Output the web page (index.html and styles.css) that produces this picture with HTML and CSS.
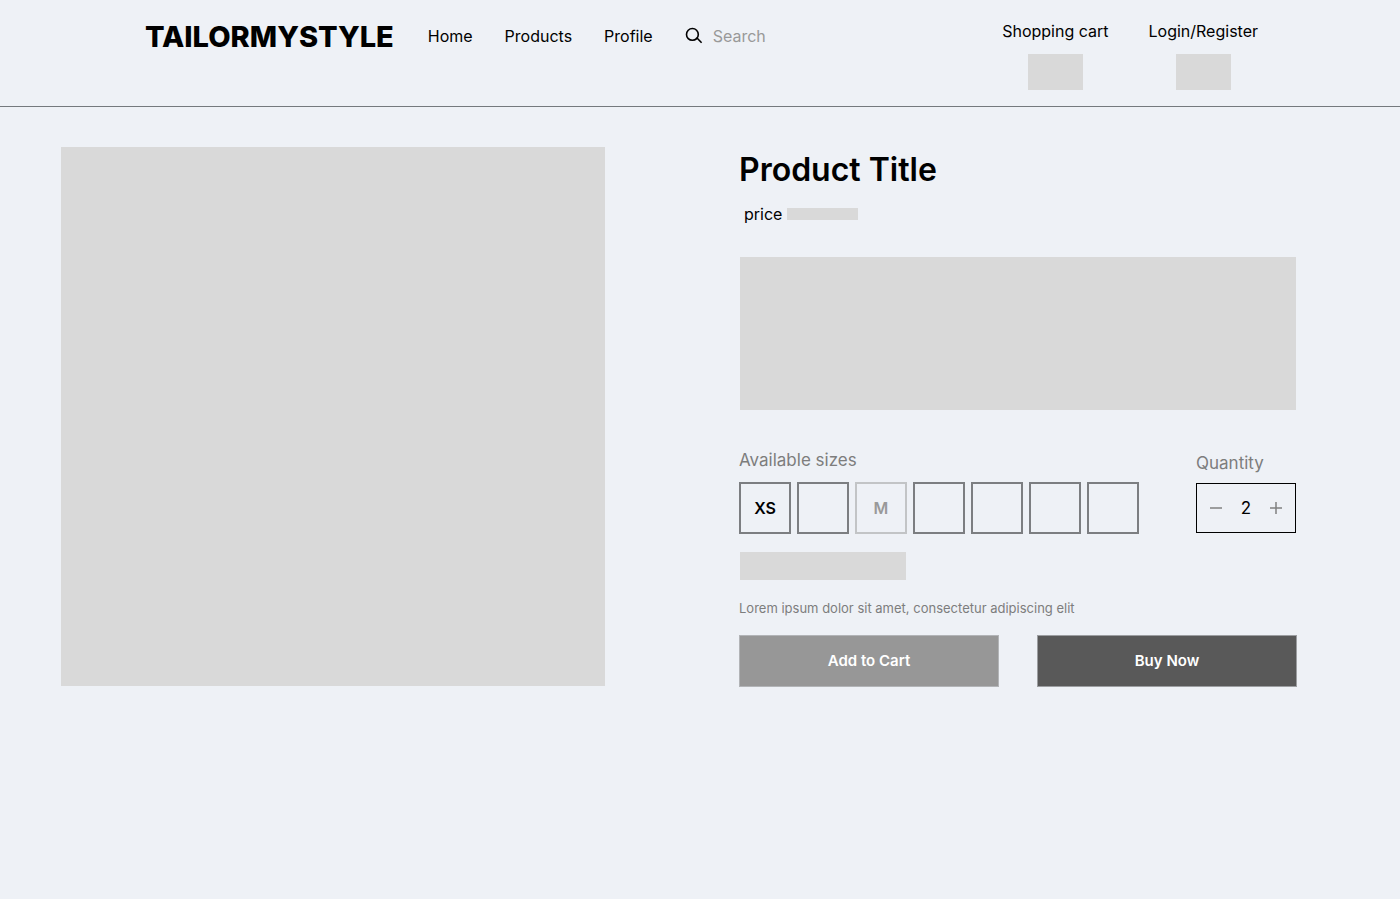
FILE: index.html
```html
<!DOCTYPE html>
<html lang="en">
<head>
<meta charset="utf-8">
<meta name="viewport" content="width=device-width, initial-scale=1">
<title>TAILORMYSTYLE</title>
<link rel="stylesheet" href="styles.css">
</head>
<body>
<header class="header">
  <a class="logo" href="#">TAILORMYSTYLE</a>
  <nav class="nav">
    <a href="#">Home</a>
    <a href="#">Products</a>
    <a href="#">Profile</a>
  </nav>
  <form class="search">
    <label class="search-label" for="search" aria-label="Search">
      <svg width="18" height="18" viewBox="0 0 18 18" fill="none" stroke="currentColor" stroke-width="1.6"><circle cx="7.4" cy="7.4" r="5.9"/><path d="M10.9 11.5L12.3 11.3L16.6 15.8"/></svg>
    </label>
    <input class="search-input" id="search" type="text" placeholder="Search">
  </form>
  <div class="account">
    <a class="account-link" href="#">Shopping cart<span class="block account-block"></span></a>
    <a class="account-link" href="#">Login/Register<span class="block account-block"></span></a>
  </div>
</header>
<main class="product">
  <div class="block photo"></div>
  <section class="details">
    <h1 class="title">Product Title</h1>
    <p class="price">price<span class="block price-block"></span></p>
    <div class="block description"></div>
    <div class="options">
      <div class="sizes">
        <h2 class="label">Available sizes</h2>
        <div class="size-list">
          <button class="size" type="button">XS</button>
          <button class="size" type="button" aria-label="Size 2"></button>
          <button class="size" type="button" disabled>M</button>
          <button class="size" type="button" aria-label="Size 4"></button>
          <button class="size" type="button" aria-label="Size 5"></button>
          <button class="size" type="button" aria-label="Size 6"></button>
          <button class="size" type="button" aria-label="Size 7"></button>
        </div>
      </div>
      <div class="quantity">
        <label class="label" for="quantity">Quantity</label>
        <div class="stepper">
          <button class="step" type="button" aria-label="Decrease"><svg width="12" height="12" viewBox="0 0 12 12" stroke="currentColor" stroke-width="1.5"><path d="M0 6H12"/></svg></button>
          <input class="amount" id="quantity" type="text" inputmode="numeric" value="2">
          <button class="step" type="button" aria-label="Increase"><svg width="12" height="12" viewBox="0 0 12 12" stroke="currentColor" stroke-width="1.5"><path d="M0 6H12M6 0V12"/></svg></button>
        </div>
      </div>
    </div>
    <div class="block guide"></div>
    <p class="note">Lorem ipsum dolor sit amet, consectetur adipiscing elit</p>
    <div class="actions">
      <button class="action" type="button">Add to Cart</button>
      <button class="action action-dark" type="button">Buy Now</button>
    </div>
  </section>
</main>
</body>
</html>
```
FILE: styles.css
```css
* { box-sizing: border-box; }

body {
  margin: 0;
  min-height: 100vh;
  background: #eef1f6;
  color: #000;
  font-family: Inter, "Liberation Sans", sans-serif;
  font-size: 16px;
  line-height: 24px;
}

a { color: inherit; text-decoration: none; }
h1, h2, p { margin: 0; }

button, input {
  font: inherit;
  color: inherit;
  padding: 0;
  border: 0;
  border-radius: 0;
  background: transparent;
}

svg { display: block; }
.block { display: block; background: #d9d9d9; }

.header {
  display: flex;
  align-items: flex-start;
  padding: 19px 142px 16px 145px;
  border-bottom: 1px solid #74797d;
}

.logo { font-size: 29px; font-weight: 800; line-height: 35px; }

.nav {
  display: flex;
  gap: 32px;
  margin-left: 34px;
  padding-top: 5px;
}

.search {
  display: flex;
  flex: 1;
  align-items: center;
  gap: 10px;
  margin-left: 32px;
  padding-top: 5px;
}

.search-input { width: 120px; height: 24px; }
.search-input::placeholder { color: #999; opacity: 1; }

.account { display: flex; gap: 40px; }

.account-link {
  display: flex;
  flex-direction: column;
  align-items: center;
  gap: 11px;
}

.account-block { width: 55px; height: 36px; }

.product {
  display: grid;
  grid-template-columns: 544fr 558fr;
  gap: 134px;
  padding: 40px 103px 40px 61px;
}

.photo { height: 539px; }

.title {
  font-size: 32px;
  font-weight: 600;
  line-height: 45px;
}

.price {
  display: flex;
  align-items: center;
  gap: 5px;
  margin-top: 10px;
  padding-left: 5px;
}

.price-block { width: 71px; height: 12px; }
.description { height: 153px; margin: 31px 1px 0; }

.options {
  display: flex;
  align-items: flex-end;
  justify-content: space-between;
  margin-top: 38px;
}

.label {
  display: block;
  color: #7d7d7d;
  font-size: 17px;
  font-weight: 400;
  line-height: 24px;
}

.size-list { display: flex; gap: 6px; margin-top: 10px; }

.size {
  width: 52px;
  height: 52px;
  border: 2px solid #7c7e81;
  font-weight: 600;
}

.size:disabled { border-color: #c2c4c6; color: #999; }

.quantity { width: 100px; margin: 0 1px 1px 0; }

.stepper {
  display: flex;
  align-items: center;
  justify-content: space-between;
  height: 50px;
  margin-top: 8px;
  padding: 0 13px;
  border: 1px solid #000;
}

.step { color: #808080; }
.amount { width: 24px; font-size: 17px; text-align: center; }
.guide { width: 166px; height: 28px; margin: 18px 0 0 1px; }

.note {
  margin-top: 18px;
  color: #7d7d7d;
  font-size: 13px;
  line-height: 20px;
}

.actions {
  display: grid;
  grid-template-columns: 1fr 1fr;
  gap: 38px;
  margin-top: 17px;
}

.action {
  height: 52px;
  border: 1px solid #b2b4b7;
  background: #979797;
  color: #fff;
  font-size: 15px;
  font-weight: 600;
}

.action-dark { border-color: #9c9ea1; background: #595959; }
```
